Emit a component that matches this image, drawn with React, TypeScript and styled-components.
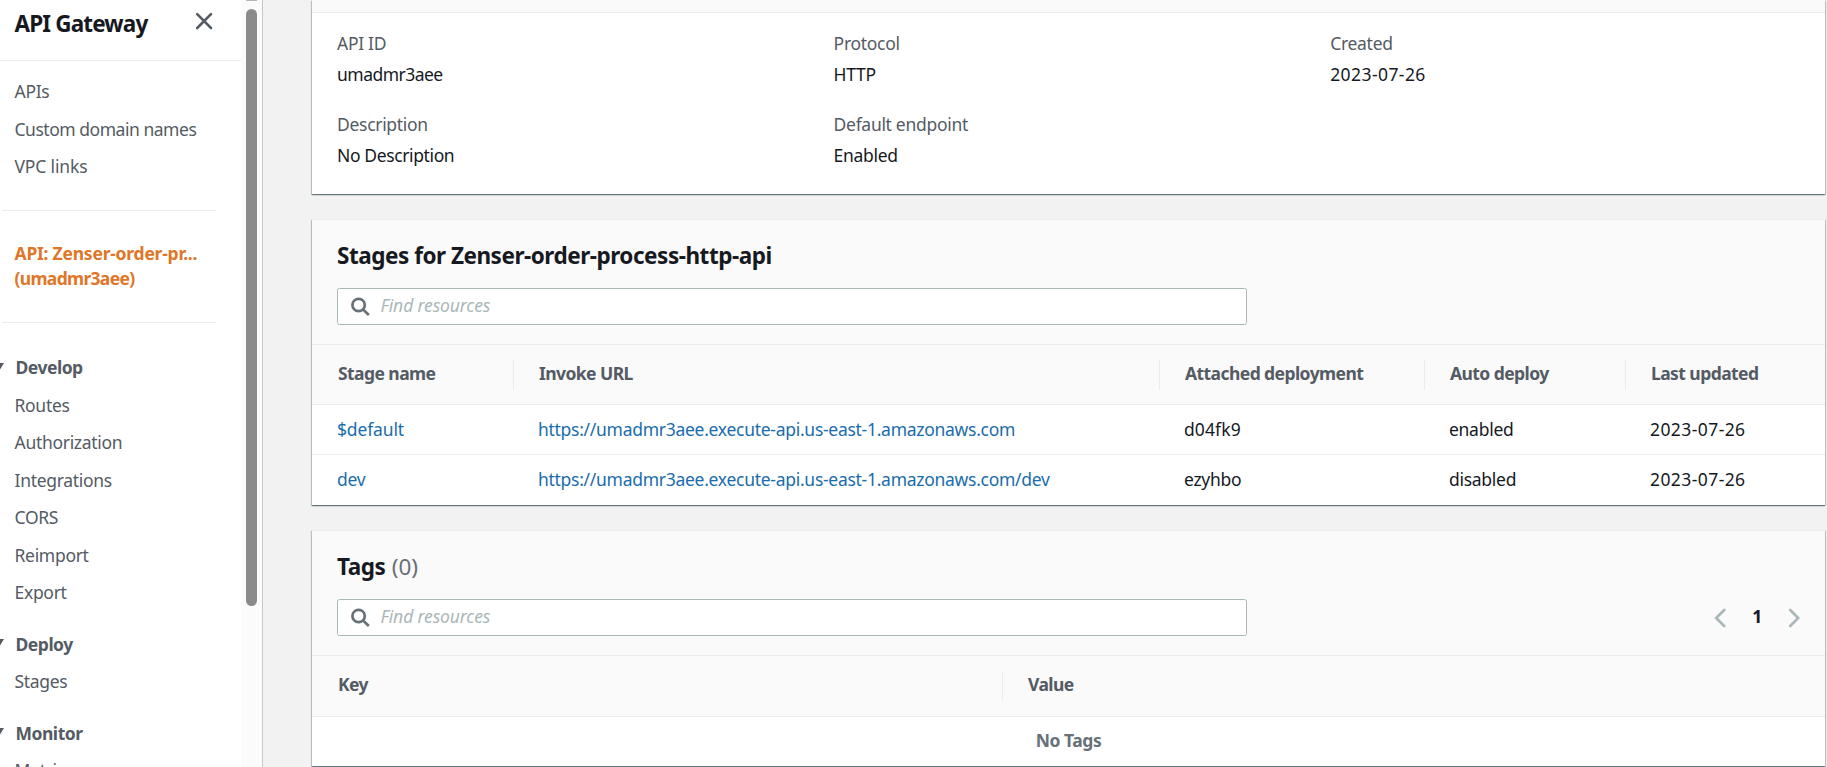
import React from "react";
import styled, { createGlobalStyle } from "styled-components";

const GlobalStyle = createGlobalStyle`
  * { box-sizing: border-box; }
  html, body { margin: 0; height: 100%; overflow: hidden; }
  body {
    background: #f2f2f2;
    color: #16191f;
    font-family: "Noto Sans", "Open Sans", sans-serif;
    font-size: 17.5px;
    letter-spacing: -0.3px;
  }
`;

const Layout = styled.div`
  display: flex;
  width: 1827px;
  height: 767px;
  overflow: hidden;
`;

/* Inline run of text with its own tracking */
const Tracked = styled.span<{ $by?: number }>`
  letter-spacing: ${(p) => (p.$by === undefined ? "inherit" : `${p.$by}px`)};
`;

/* ---- sidebar ---- */

const Sidebar = styled.aside`
  flex: none;
  display: flex;
  width: 263px;
  background: #fff;
  border-right: 1px solid #c4c9ca;
`;

const SidebarContent = styled.div`
  width: 241px;
  overflow: hidden;
`;

const SidebarHeader = styled.header`
  display: flex;
  justify-content: space-between;
  align-items: flex-start;
  height: 61px;
  padding: 0 28px 0 14.5px;
  border-bottom: 1px solid #eaeded;
`;

const ServiceName = styled.h2`
  margin: 0;
  font-size: 22.5px;
  line-height: 47px;
  font-weight: 700;
  letter-spacing: -0.85px;
`;

const CloseIcon = styled.svg`
  width: 18px;
  height: 18px;
  margin-top: 12px;
`;

const NavList = styled.ul<{ $top?: number }>`
  list-style: none;
  margin: 0;
  padding: ${(p) => p.$top ?? 0}px 0 0 14.5px;
`;

const NavItem = styled.li`
  height: 37.5px;
  line-height: 37.5px;
  color: #545b64;
  white-space: nowrap;
`;

const Divider = styled.hr`
  height: 1px;
  margin: 24px 25px 0 2px;
  border: 0;
  background: #eaeded;
`;

const CurrentApi = styled.div`
  margin: 30px 0 31px;
  padding-left: 14.5px;
  line-height: 25px;
  font-weight: 700;
  color: #e07628;

  & + ${Divider} { margin-top: 0; }
`;

const SectionTitle = styled.div<{ $gap: number }>`
  display: flex;
  align-items: center;
  gap: 12px;
  height: 38px;
  margin-top: ${(p) => p.$gap}px;
  margin-left: -7.5px;
  font-weight: 700;
  color: #545b64;
  letter-spacing: -0.48px;
`;

const Caret = styled.svg`
  flex: none;
  width: 11px;
  height: 9px;
`;

const ScrollTrack = styled.div`
  display: flex;
  flex-direction: column;
  gap: 8px;
  width: 21px;
  padding-left: 5px;
  background: #fbfbfb;
`;

const ScrollArrow = styled.div`
  width: 11px;
  height: 1px;
  background: #b5b5b5;
`;

const ScrollThumb = styled.div`
  width: 11px;
  height: 597px;
  border-radius: 6px;
  background: #8b8b8b;
`;

/* ---- panels ---- */

const Main = styled.main`
  flex: none;
  display: flex;
  flex-direction: column;
  gap: 25px;
  width: 1562px;
  padding-left: 49px;
`;

const Panel = styled.section<{ $height: number }>`
  flex: none;
  height: ${(p) => p.$height}px;
  background: #fff;
  border-top: 1px solid #eaeded;
  box-shadow: 0 1px 1px 0 rgba(0, 28, 36, 0.38), 1px 1px 1px 0 rgba(0, 28, 36, 0.18),
    -1px 1px 1px 0 rgba(0, 28, 36, 0.18);

  &:first-child { border-top-color: #fafafa; }
`;

const HeaderStrip = styled.div`
  height: 12px;
  background: #fafafa;
  border-bottom: 1px solid #eaeded;
`;

const Details = styled.dl`
  display: grid;
  grid-template-columns: repeat(3, 496.6px);
  row-gap: 19px;
  margin: 0;
  padding: 14.5px 0 0 25px;
`;

const Term = styled.dt`
  line-height: 31px;
  color: #545b64;
`;

const Value = styled.dd`
  margin: 0;
  line-height: 31px;
`;

const PanelHeader = styled.div`
  height: 125px;
  padding: 19px 25px 0 25px;
  background: #fafafa;
  border-bottom: 1px solid #eaeded;
`;

const PanelTitle = styled.h2`
  margin: 0 0 16px;
  font-size: 22.5px;
  line-height: 33px;
  font-weight: 700;
  letter-spacing: -0.47px;
`;

const Counter = styled.span`
  margin-left: 1px;
  font-weight: 400;
  color: #687078;
  letter-spacing: 0;
`;

const Tools = styled.div`
  display: flex;
  justify-content: space-between;
  align-items: center;
`;

const SearchBox = styled.div`
  display: flex;
  align-items: center;
  gap: 10.5px;
  width: 910px;
  height: 37px;
  padding-left: 13px;
  background: #fff;
  border: 1px solid #aab7b8;
  border-radius: 2.5px;
`;

const Placeholder = styled.span`
  padding-bottom: 3px;
  font-style: italic;
  color: #aab7b8;
  letter-spacing: -0.12px;
`;

const Pager = styled.div`
  display: flex;
  align-items: center;
  gap: 26px;
  font-weight: 700;
`;

const PageNumber = styled.span`
  padding-bottom: 3px;
`;

const HeadRow = styled.div<{ $columns: string; $height: number }>`
  display: grid;
  grid-template-columns: ${(p) => p.$columns};
  align-items: center;
  height: ${(p) => p.$height}px;
  background: #fafafa;
  border-bottom: 1px solid #eaeded;
`;

const HeadCell = styled.div`
  height: 30px;
  padding-left: 26px;
  line-height: 27px;
  font-weight: 700;
  color: #545b64;
  letter-spacing: -0.57px;
  white-space: nowrap;

  & + & { padding-left: 25px; border-left: 1px solid #eaeded; }
`;

const Row = styled.div<{ $columns: string }>`
  display: grid;
  grid-template-columns: ${(p) => p.$columns};
  height: 49px;

  & + & { height: 50px; border-top: 1px solid #eaeded; }
`;

const Cell = styled.div<{ $link?: boolean }>`
  padding-left: 25px;
  line-height: 48px;
  color: ${(p) => (p.$link ? "#1a6dac" : "#16191f")};
  letter-spacing: -0.28px;
  white-space: nowrap;
`;

const Empty = styled.div`
  line-height: 46px;
  text-align: center;
  font-weight: 700;
  color: #687078;
  letter-spacing: -0.45px;
`;

const SearchIcon = () => (
  <svg width="19" height="19" viewBox="0 0 19 19" fill="none" stroke="#687078" strokeWidth="2.7">
    <circle cx="7.6" cy="8" r="6.2" />
    <path d="M12 12.4 L17.8 18" />
  </svg>
);

const Chevron = ({ d }: { d: string }) => (
  <svg
    width="12"
    height="20"
    viewBox="0 0 12 20"
    fill="none"
    stroke="#aab7b8"
    strokeWidth="2.7"
    strokeLinecap="round"
  >
    <path d={d} />
  </svg>
);

const Search = () => (
  <SearchBox>
    <SearchIcon />
    <Placeholder>Find resources</Placeholder>
  </SearchBox>
);

type Label = { text: string; by?: number };

const topLinks: Label[] = [
  { text: "APIs" },
  { text: "Custom domain names", by: -0.47 },
  { text: "VPC links", by: -0.15 },
];

const sections = [
  {
    title: "Develop",
    gap: 25.5,
    items: ["Routes", "Authorization", "Integrations", "CORS", "Reimport", "Export"],
  },
  { title: "Deploy", gap: 13, items: ["Stages"] },
  { title: "Monitor", gap: 13, items: ["Metrics"] },
];

const date: Label = { text: "2023-07-26", by: 0.42 };

const details: [string, Label][] = [
  ["API ID", { text: "umadmr3aee", by: -0.52 }],
  ["Protocol", { text: "HTTP" }],
  ["Created", date],
  ["Description", { text: "No Description", by: -0.38 }],
  ["Default endpoint", { text: "Enabled" }],
];

const stageColumns = "201px 646px 265px 201px 200px";
const tagColumns = "690px 823px";

const stages: Label[][] = [
  [
    { text: "$default", by: -0.15 },
    { text: "https://umadmr3aee.execute-api.us-east-1.amazonaws.com" },
    { text: "d04fk9", by: 0.1 },
    { text: "enabled" },
    date,
  ],
  [
    { text: "dev" },
    { text: "https://umadmr3aee.execute-api.us-east-1.amazonaws.com/dev" },
    { text: "ezyhbo" },
    { text: "disabled" },
    date,
  ],
];

export default function App() {
  return (
    <Layout>
      <GlobalStyle />
      <Sidebar>
        <SidebarContent>
          <SidebarHeader>
            <ServiceName>API Gateway</ServiceName>
            <CloseIcon
              viewBox="0 0 18 18"
              fill="none"
              stroke="#545b64"
              strokeWidth="2.6"
              strokeLinecap="round"
            >
              <path d="M2.2 2.2 L16 16 M16 2.2 L2.2 16" />
            </CloseIcon>
          </SidebarHeader>
          <NavList $top={12}>
            {topLinks.map((item) => (
              <NavItem key={item.text}>
                <Tracked $by={item.by}>{item.text}</Tracked>
              </NavItem>
            ))}
          </NavList>
          <Divider />
          <CurrentApi>
            <Tracked $by={-0.23}>API: Zenser-order-pr...</Tracked>
            <br />
            <Tracked $by={-0.68}>(umadmr3aee)</Tracked>
          </CurrentApi>
          <Divider />
          {sections.map((s) => (
            <React.Fragment key={s.title}>
              <SectionTitle $gap={s.gap}>
                <Caret viewBox="0 0 11 9" fill="#545b64">
                  <path d="M0 0 H11 L5.5 9 Z" />
                </Caret>
                {s.title}
              </SectionTitle>
              <NavList $top={0.5}>
                {s.items.map((item) => (
                  <NavItem key={item}>{item}</NavItem>
                ))}
              </NavList>
            </React.Fragment>
          ))}
        </SidebarContent>
        <ScrollTrack>
          <ScrollArrow />
          <ScrollThumb />
        </ScrollTrack>
      </Sidebar>

      <Main>
        <Panel $height={194}>
          <HeaderStrip />
          <Details>
            {details.map(([term, value]) => (
              <div key={term}>
                <Term>{term}</Term>
                <Value>
                  <Tracked $by={value.by}>{value.text}</Tracked>
                </Value>
              </div>
            ))}
          </Details>
        </Panel>

        <Panel $height={286}>
          <PanelHeader>
            <PanelTitle>Stages for Zenser-order-process-http-api</PanelTitle>
            <Search />
          </PanelHeader>
          <HeadRow $columns={stageColumns} $height={60}>
            {["Stage name", "Invoke URL", "Attached deployment", "Auto deploy", "Last updated"].map((h) => (
              <HeadCell key={h}>{h}</HeadCell>
            ))}
          </HeadRow>
          {stages.map((row) => (
            <Row key={row[0].text} $columns={stageColumns}>
              {row.map((cell, i) => (
                <Cell key={i} $link={i < 2}>
                  <Tracked $by={cell.by}>{cell.text}</Tracked>
                </Cell>
              ))}
            </Row>
          ))}
        </Panel>

        <Panel $height={236}>
          <PanelHeader>
            <PanelTitle>
              Tags <Counter>(0)</Counter>
            </PanelTitle>
            <Tools>
              <Search />
              <Pager>
                <Chevron d="M10.2 2 L2.2 10 L10.2 18" />
                <PageNumber>1</PageNumber>
                <Chevron d="M2.2 2 L10.2 10 L2.2 18" />
              </Pager>
            </Tools>
          </PanelHeader>
          <HeadRow $columns={tagColumns} $height={61}>
            <HeadCell>Key</HeadCell>
            <HeadCell>Value</HeadCell>
          </HeadRow>
          <Empty>No Tags</Empty>
        </Panel>
      </Main>
    </Layout>
  );
}
